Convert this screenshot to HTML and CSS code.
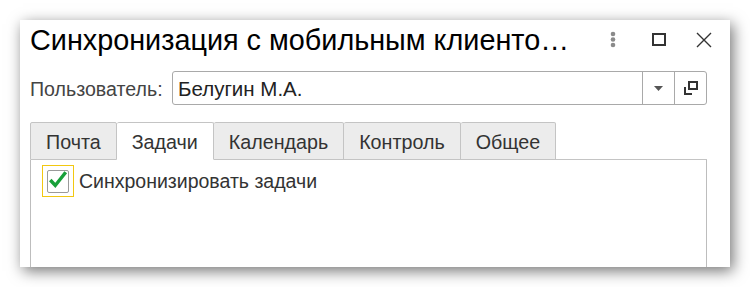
FILE: index.html
```html
<!doctype html>
<html lang="ru">
<head>
    <meta charset="utf-8">
    <title>Синхронизация с мобильным клиентом</title>
    <link rel="stylesheet" href="styles.css">
</head>
<body class="page">
<div class="window">
    <header class="titlebar">
        <h1 class="title">Синхронизация с мобильным клиенто…</h1>
        <div class="win-buttons">
            <svg class="win-btn" width="10" height="18" viewBox="0 0 10 18">
                <circle cx="5" cy="3" r="2.3" fill="#8a8a8a"/>
                <circle cx="5" cy="8.5" r="2.3" fill="#8a8a8a"/>
                <circle cx="5" cy="14" r="2.3" fill="#8a8a8a"/>
            </svg>
            <svg class="win-btn" width="14" height="14" viewBox="0 0 14 14">
                <rect x="1" y="1" width="12" height="11" fill="none" stroke="#333" stroke-width="2"/>
            </svg>
            <svg class="win-btn" width="16" height="16" viewBox="0 0 16 16">
                <path d="M1 1 L15 15 M15 1 L1 15" stroke="#333" stroke-width="1.4" fill="none"/>
            </svg>
        </div>
    </header>

    <div class="field-row">
        <span class="field-label">Пользователь:</span>
        <div class="select">
            <span class="select-value">Белугин М.А.</span>
            <span class="select-btn">
                <svg width="9" height="5" viewBox="0 0 9 5"><path d="M0 0 H9 L4.5 5 Z" fill="#555"/></svg>
            </span>
            <span class="select-btn">
                <svg width="14" height="14" viewBox="0 0 14 14">
                    <path d="M1 6 V13 H8" fill="none" stroke="#333" stroke-width="2"/>
                    <rect x="5" y="1" width="8" height="7" fill="none" stroke="#333" stroke-width="2"/>
                </svg>
            </span>
        </div>
    </div>

    <div class="tabs">
        <div class="tab">Почта</div>
        <div class="tab tab-active">Задачи</div>
        <div class="tab">Календарь</div>
        <div class="tab">Контроль</div>
        <div class="tab">Общее</div>
        <div class="tab-rest"></div>
    </div>

    <div class="tab-panel">
        <label class="check">
            <span class="check-focus">
                <span class="check-box">
                    <svg width="22" height="20" viewBox="0 0 22 20">
                        <path d="M2.5 10 L8 16 L19.5 1.5" fill="none" stroke="#18a03a" stroke-width="3.8"/>
                    </svg>
                </span>
            </span>
            <span class="check-label">Синхронизировать задачи</span>
        </label>
    </div>
</div>
</body>
</html>
```

FILE: styles.css
```css
.page {
    margin: 0;
    background: #ffffff;
    font-family: "Liberation Sans", Arial, sans-serif;
}

.window {
    width: 700px;
    height: 247px;
    margin: 20px;
    padding-left: 10px;
    background: #ffffff;
    box-shadow: 3px 4px 14px rgba(0, 0, 0, 0.55);
    overflow: hidden;
}

.titlebar {
    display: flex;
    align-items: flex-start;
    height: 46px;
    padding-top: 5px;
    padding-right: 18px;
}

.title {
    flex: 1;
    margin: 0;
    font-size: 28.8px;
    font-weight: normal;
    line-height: 31px;
    color: #000;
    white-space: nowrap;
}

.win-buttons {
    display: flex;
    align-items: center;
    height: 30px;
}

.win-btn {
    display: block;
}

.win-buttons .win-btn:nth-child(1) {
    margin-right: 34px;
}

.win-buttons .win-btn:nth-child(2) {
    margin-right: 30px;
}

.field-row {
    display: flex;
    align-items: center;
    height: 34px;
    padding-right: 23px;
}

.field-label {
    width: 142px;
    font-size: 19.6px;
    color: #444;
    padding-top: 3px;
}

.select {
    flex: 1;
    display: flex;
    height: 32px;
    border: 1px solid #a9a9a9;
    border-radius: 3px;
}

.select-value {
    flex: 1;
    display: flex;
    align-items: center;
    padding-left: 5px;
    padding-top: 1px;
    font-size: 20.5px;
    color: #222;
}

.select-btn {
    display: flex;
    align-items: center;
    justify-content: center;
    width: 31px;
    border-left: 1px solid #a9a9a9;
}

.tabs {
    display: flex;
    margin-top: 17px;
    height: 38px;
    padding-right: 23px;
}

.tab {
    display: flex;
    align-items: center;
    padding: 3px 15px 0;
    background: #ececec;
    border: 1px solid #c4c4c4;
    border-left: 0;
    border-radius: 2px 2px 0 0;
    font-size: 19.7px;
    color: #333;
}

.tab:first-child {
    border-left: 1px solid #c4c4c4;
}

.tab-active {
    background: #ffffff;
    border-bottom-color: #ffffff;
}

.tab-rest {
    flex: 1;
    border-bottom: 1px solid #c4c4c4;
}

.tab-panel {
    height: 120px;
    margin-right: 23px;
    padding: 5px 11px;
    border: 1px solid #bdbdbd;
    border-top: 0;
}

.check {
    display: flex;
    align-items: center;
}

.check-focus {
    display: flex;
    align-items: center;
    justify-content: center;
    width: 30px;
    height: 30px;
    border: 1px solid #f2c811;
    margin-right: 5px;
}

.check-box {
    display: flex;
    align-items: center;
    justify-content: center;
    width: 20px;
    height: 21px;
    border: 1px solid #9a9a9a;
    border-radius: 2px;
}

.check-box svg {
    margin-top: -3px;
}

.check-label {
    font-size: 19.5px;
    color: #333;
}
```
